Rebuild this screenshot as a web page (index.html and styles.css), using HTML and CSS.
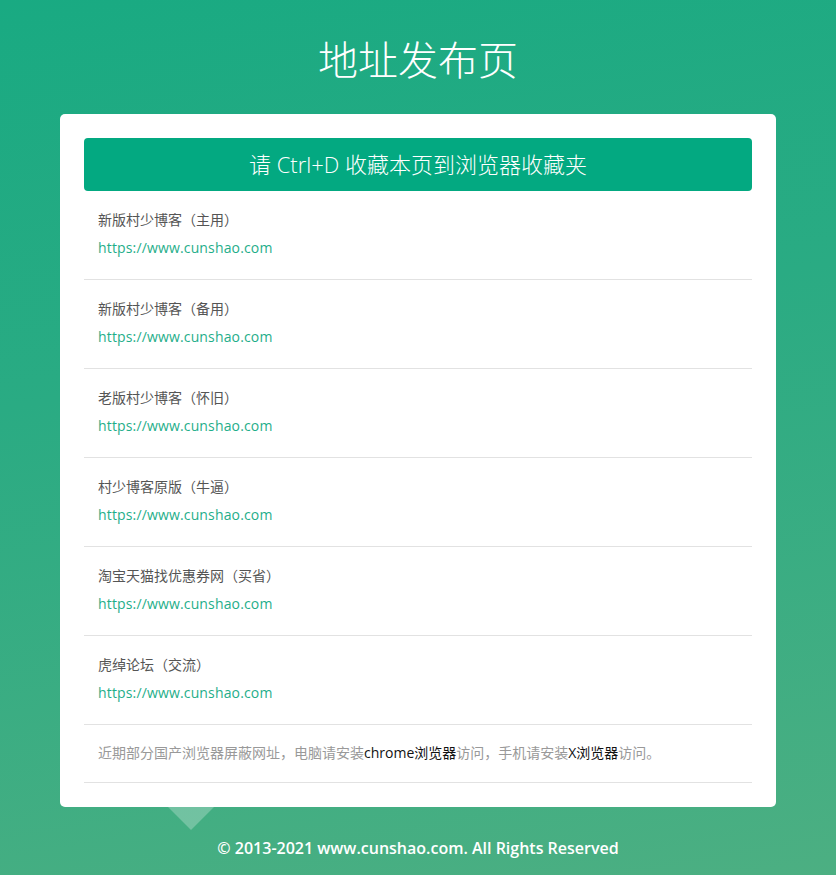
FILE: index.html
```html
<!DOCTYPE html>
<html lang="zh-CN">
<head>
<meta charset="utf-8">
<title>地址发布页</title>
<link rel="stylesheet" href="styles.css">
</head>
<body>
<h1 class="title">地址发布页</h1>
<div class="card">
  <div class="tip">请 Ctrl+D 收藏本页到浏览器收藏夹</div>
  <ul class="list">
    <li class="item"><div class="name">新版村少博客（主用）</div><a class="url" href="#">https://www.cunshao.com</a></li>
    <li class="item"><div class="name">新版村少博客（备用）</div><a class="url" href="#">https://www.cunshao.com</a></li>
    <li class="item"><div class="name">老版村少博客（怀旧）</div><a class="url" href="#">https://www.cunshao.com</a></li>
    <li class="item"><div class="name">村少博客原版（牛逼）</div><a class="url" href="#">https://www.cunshao.com</a></li>
    <li class="item"><div class="name">淘宝天猫找优惠券网（买省）</div><a class="url" href="#">https://www.cunshao.com</a></li>
    <li class="item"><div class="name">虎绰论坛（交流）</div><a class="url" href="#">https://www.cunshao.com</a></li>
    <li class="note">近期部分国产浏览器屏蔽网址，电脑请安装<b>chrome浏览器</b>访问，手机请安装<b>X浏览器</b>访问。</li>
  </ul>
  <span class="arrow"></span>
</div>
<footer class="footer">© 2013-2021 www.cunshao.com. All Rights Reserved</footer>
</body>
</html>
```
FILE: styles.css
```css
html {
  height: 100%;
}
body {
  margin: 0;
  min-height: 100%;
  padding: 30px 0 15px;
  box-sizing: border-box;
  background: linear-gradient(170deg, #19aa82 0%, #2aab83 40%, #4caf82 100%);
  font-family: "Open Sans", "Noto Sans CJK SC", sans-serif;
  font-size: 14px;
  color: #555;
}
.title {
  margin: 0 0 28px;
  height: 56px;
  line-height: 56px;
  text-align: center;
  font-size: 40px;
  font-weight: 300;
  color: #fff;
  font-family: "Noto Sans CJK SC", sans-serif;
}
.card {
  position: relative;
  width: 716px;
  margin: 0 auto;
  padding: 24px;
  box-sizing: border-box;
  background: #fff;
  border-radius: 5px;
}
.tip {
  height: 53px;
  line-height: 53px;
  background: #03a981;
  border-radius: 4px;
  color: #fff;
  text-align: center;
  font-size: 22px;
  font-weight: 300;
}
.list {
  list-style: none;
  margin: 0;
  padding: 0;
}
.item {
  padding: 15px 14px 17px;
  border-bottom: 1px solid #e2e2e2;
  line-height: 28px;
}
.name {
  color: #555;
}
.url {
  display: block;
  color: #1fae8a;
  text-decoration: none;
  letter-spacing: 0.15px;
}
.note {
  padding: 14px 14px 15px;
  border-bottom: 1px solid #e2e2e2;
  line-height: 28px;
  color: #999;
}
.note b {
  font-weight: normal;
  color: #111;
}
.arrow {
  position: absolute;
  left: 108px;
  top: 100%;
  width: 0;
  height: 0;
  border-left: 23px solid transparent;
  border-right: 23px solid transparent;
  border-top: 23px solid rgba(255, 255, 255, 0.25);
}
.footer {
  margin-top: 29px;
  line-height: 24px;
  text-align: center;
  color: #fff;
  font-size: 16px;
  font-weight: 600;
}
```
